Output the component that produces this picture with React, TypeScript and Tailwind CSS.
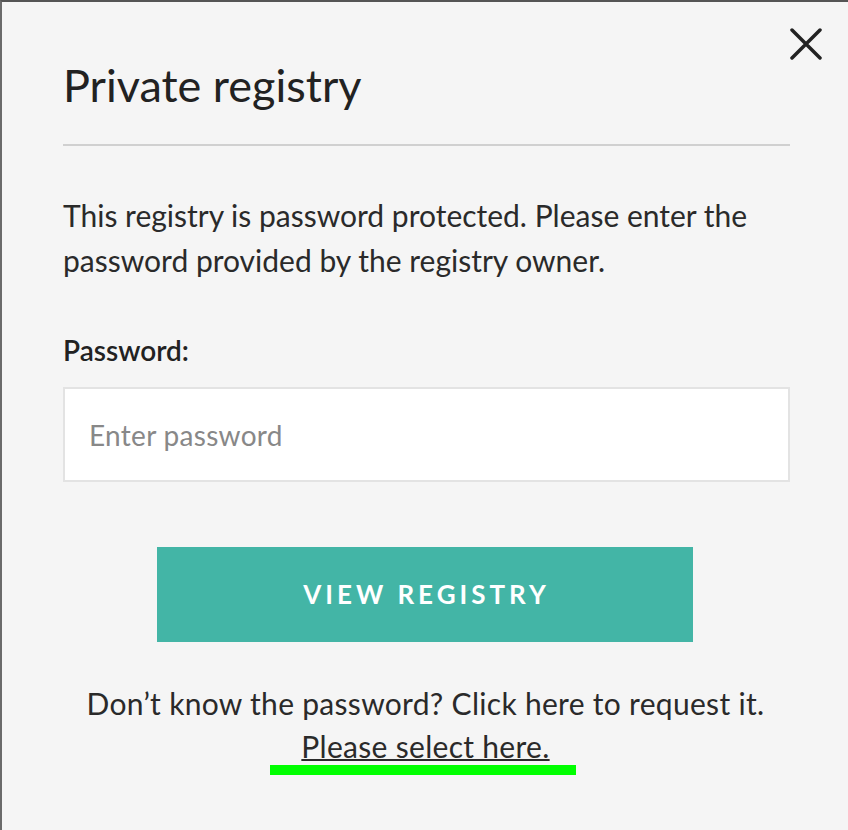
import React from "react";

export default function App() {
  return (
    <div
      className="relative w-[848px] h-[830px] bg-[#f5f5f5] border-t-2 border-l-2 border-t-[#555555] border-l-[#6b6b6b] overflow-hidden text-[#222222]"
      style={{ fontFamily: "Lato, 'Open Sans', sans-serif" }}
    >
      <button className="absolute top-[26px] right-[26px] w-[32px] h-[32px] flex items-center justify-center">
        <svg width="32" height="32" viewBox="0 0 32 32">
          <path d="M2 2 L30 30 M30 2 L2 30" stroke="#222" strokeWidth="3.5" strokeLinecap="round" />
        </svg>
      </button>
      <div className="pl-[61px] pr-[58px] pt-[57px]">
        <h1 className="text-[45px] leading-[52px] font-normal">Private registry</h1>
        <div className="mt-[33px] h-[2px] bg-[#d0d0d0]" />
        <p className="mt-[47px] text-[30px] leading-[45px] text-[#2a2a2a]">
          This registry is password protected. Please enter the password provided by the registry owner.
        </p>
        <label className="block mt-[50px] text-[28px] leading-[34px] font-semibold text-[#222]">Password:</label>
        <input
          type="password"
          placeholder="Enter password"
          className="mt-[20px] w-full h-[95px] bg-white border-2 border-[#e3e3e3] px-[24px] text-[28px] tracking-[0.3px] placeholder:text-[#888888] outline-none"
        />
        <div className="flex justify-center pr-[4px]">
          <button className="mt-[65px] w-[536px] h-[95px] bg-[#43b5a6] text-white text-[26px] font-bold tracking-[4px] pl-[4px]">
            VIEW REGISTRY
          </button>
        </div>
        <div className="mt-[40px] text-center text-[30px] leading-[43px] tracking-[0.3px] text-[#2a2a2a] -ml-[2px]">
          <div>Don’t know the password? Click here to request it.</div>
          <div className="flex flex-col items-center">
            <a className="underline underline-offset-[1px] decoration-[2px]">Please select here.</a>
            <div className="-mt-[3px] w-[306px] h-[10px] bg-[#00ff00] -ml-[6px]" />
          </div>
        </div>
      </div>
    </div>
  );
}
